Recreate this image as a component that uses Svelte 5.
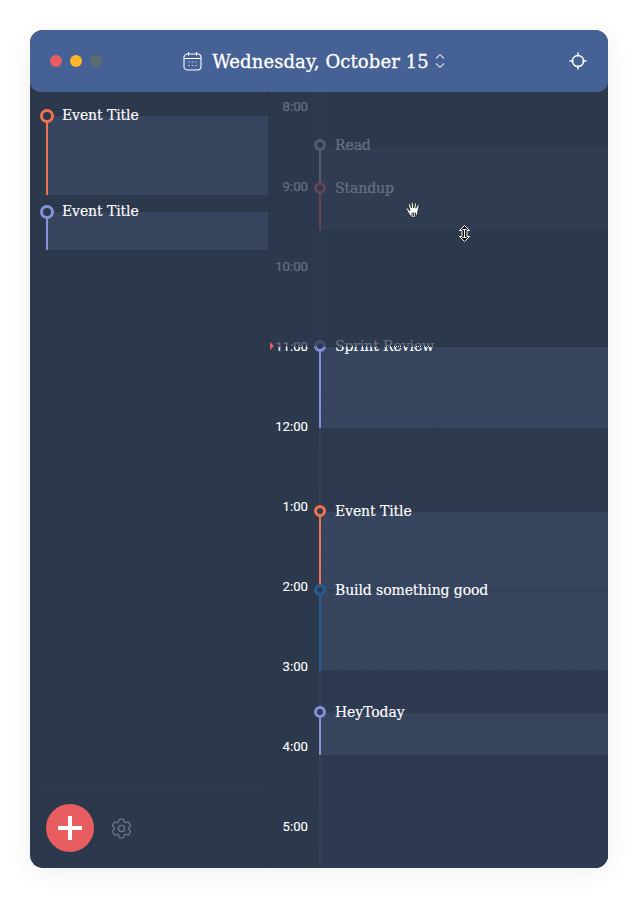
<script>
  const hours = ["8:00", "9:00", "10:00", "11:00", "12:00", "1:00", "2:00", "3:00", "4:00", "5:00"];

  // top / height are in px from the top of the timeline
  const events = [
    { title: "Read", top: 54, height: 84, color: "#a3c4c4" },
    { title: "Standup", top: 97, height: 41, color: "#f06a66" },
    { title: "Sprint Review", top: 255, height: 81, color: "#8090dc" },
    { title: "Event Title", top: 420, height: 78, color: "#ef7350" },
    { title: "Build something good", top: 499, height: 79, color: "#265c94" },
    { title: "HeyToday", top: 621, height: 42, color: "#8592da" }
  ];

  const allDay = [
    { title: "Event Title", height: 79, color: "#ef7350" },
    { title: "Event Title", height: 38, color: "#8592da" }
  ];

  const nowTop = 254;
</script>

<div class="page">
  <div class="window">
    <header class="titlebar">
      <div class="lights">
        <span class="light red"></span>
        <span class="light yellow"></span>
        <span class="light grey"></span>
      </div>
      <div class="date">
        <svg class="cal" width="19" height="20" viewBox="0 0 19 20" fill="none" stroke="#fff" stroke-width="1.1">
          <rect x="1" y="3" width="17" height="16" rx="3.5" />
          <path d="M1 7.500h17M5.500 1v3.500M13.500 1v3.500" />
          <path d="M5.500 11h1.400M8.800 11h1.400M12.100 11h1.400M5.500 14.500h1.400M8.800 14.500h1.400M12.100 14.500h1.400" stroke-opacity=".75" />
        </svg>
        <span class="date-text">Wednesday, October 15</span>
        <svg class="updown" width="10" height="16" viewBox="0 0 10 16" fill="none" stroke="#cfd6e4" stroke-width="1.1">
          <path d="M1 5.500 5 1.500l4 4M1 10.500l4 4 4-4" />
        </svg>
      </div>
      <svg class="target" width="18" height="18" viewBox="0 0 18 18" fill="none" stroke="#fff" stroke-width="1.5">
        <circle cx="9" cy="9" r="5.600" />
        <path d="M9 0.500v4M9 13.500v4M0.500 9h4M13.500 9h4" />
      </svg>
    </header>

    <div class="body">
      <aside class="sidebar">
        <div class="all-day">
          {#each allDay as ev}
            <div class="side-event">
              <div class="side-head">
                <span class="dot" style="border-color: {ev.color}"></span>
                <span class="ev-title">{ev.title}</span>
              </div>
              <div class="side-band" style="height: {ev.height}px; border-left-color: {ev.color}"></div>
            </div>
          {/each}
        </div>
        <div class="side-foot">
          <button class="add" aria-label="Add event">
            <svg width="24" height="24" viewBox="0 0 24 24" fill="#fff">
              <path d="M10 0h4v10h10v4H14v10h-4V14H0v-4h10z" />
            </svg>
          </button>
          <svg class="gear" width="25" height="25" viewBox="0 0 24 24" fill="none" stroke="#66758a" stroke-width="1.300" stroke-linejoin="round">
            <circle cx="12" cy="12" r="3" />
            <path d="M9.594 3.940c.09-.542.56-.94 1.110-.94h2.593c.55 0 1.020.398 1.110.94l.213 1.281c.063.374.313.686.645.87.074.04.147.083.22.127.324.196.72.257 1.075.124l1.217-.456a1.125 1.125 0 0 1 1.370.49l1.296 2.247a1.125 1.125 0 0 1-.26 1.431l-1.003.827c-.293.24-.438.613-.431.992a6.759 6.759 0 0 1 0 .255c-.007.378.138.75.43.99l1.005.828c.424.35.534.954.26 1.430l-1.298 2.247a1.125 1.125 0 0 1-1.369.491l-1.217-.456c-.355-.133-.75-.072-1.076.124a6.570 6.570 0 0 1-.22.128c-.331.183-.581.495-.644.869l-.213 1.280c-.09.543-.56.941-1.110.941h-2.594c-.55 0-1.020-.398-1.110-.94l-.213-1.281c-.062-.374-.312-.686-.644-.87a6.520 6.520 0 0 1-.22-.127c-.325-.196-.72-.257-1.076-.124l-1.217.456a1.125 1.125 0 0 1-1.369-.49l-1.297-2.247a1.125 1.125 0 0 1 .26-1.431l1.004-.827c.292-.24.437-.613.43-.992a6.932 6.932 0 0 1 0-.255c.007-.378-.138-.75-.43-.99l-1.004-.828a1.125 1.125 0 0 1-.26-1.430l1.297-2.247a1.125 1.125 0 0 1 1.370-.491l1.216.456c.356.133.751.072 1.076-.124.072-.044.146-.087.22-.128.332-.183.582-.495.644-.869l.214-1.281z" />
          </svg>
        </div>
      </aside>

      <main class="timeline">
        <div class="hours">
          {#each hours as h}
            <div class="hour">{h}</div>
          {/each}
        </div>
        <div class="track">
          <div class="rail"></div>
          {#each events as ev}
            <div class="event" style="top: {ev.top}px; height: {ev.height}px">
              <div class="band"></div>
              <div class="stem" style="background: {ev.color}"></div>
              <span class="dot on-track" style="border-color: {ev.color}"></span>
              <span class="ev-title on-track-title">{ev.title}</span>
            </div>
          {/each}
        </div>
        <div class="past" style="height: {nowTop}px"></div>
        <div class="now" style="top: {nowTop}px"></div>
      </main>
    </div>

    <svg class="cursor hand" width="17" height="18" viewBox="0 0 17 17">
      <path d="M1 7c1-1 2 0 4 2.500L3.500 3.500c-.3-1.300 1.400-1.600 1.800-.4L6.500 6.500 6.300 1.700c0-1.300 1.700-1.300 1.800 0L8.800 6.500 9.700 2c.3-1.200 1.900-.9 1.700.4l-.6 4.300 1.700-3c.6-1 2-.4 1.500.7L12.800 10c-.3 2-.8 5.500-3.300 5.500H7.500C5 15.500 3.500 11 1 7z" fill="#fff" stroke="#111" stroke-width=".7" />
      <path d="M7 11v3.500M8.700 11v3.500M10.400 11v3.500" stroke="#111" stroke-width=".9" />
    </svg>
    <svg class="cursor resize" width="13" height="17" viewBox="0 0 13 17">
      <path d="M6.500.5 11.500 5.500H9v6h2.500l-5 5-5-5H4v-6H1.500z" fill="#111" stroke="#fff" stroke-width="1" />
      <path d="M4.500 4.500h4M4.500 12.500h4M6.500 4.500v8" stroke="#fff" stroke-width="1" />
    </svg>
  </div>
</div>

<style>
  :global(body) {
    margin: 0;
    background: #fff;
  }

  .page {
    width: 638px;
    height: 898px;
    padding: 30px;
    box-sizing: border-box;
  }

  .window {
    position: relative;
    width: 578px;
    height: 838px;
    display: flex;
    flex-direction: column;
    border-radius: 13px;
    overflow: hidden;
    background: #2c384b;
    box-shadow: 0 4px 26px rgba(0, 0, 0, 0.07);
    font-family: "DejaVu Serif", serif;
  }

  .titlebar {
    height: 62px;
    flex: none;
    display: flex;
    align-items: center;
    justify-content: center;
    position: relative;
    z-index: 3;
    background: #466195;
    border-radius: 0 0 10px 10px;
  }

  .lights {
    position: absolute;
    left: 20px;
    display: flex;
    gap: 8px;
  }

  .light {
    width: 12px;
    height: 12px;
    border-radius: 50%;
  }
  .red { background: #e85d5f; }
  .yellow { background: #fdb52a; }
  .grey { background: #5b6b6c; }

  .date {
    display: flex;
    align-items: center;
    color: #fff;
    gap: 10px;
    margin-right: 10px;
  }

  .date-text {
    font-size: 18px;
    letter-spacing: 0.1px;
    -webkit-text-stroke: 0.3px #fff;
  }

  .updown {
    margin-left: -4px;
  }

  .target {
    position: absolute;
    right: 21px;
  }

  .body {
    flex: 1;
    display: flex;
    min-height: 0;
  }

  .sidebar {
    width: 238px;
    flex: none;
    display: flex;
    flex-direction: column;
    border-right: 1px dotted #252f40;
  }

  .all-day {
    flex: 1;
    padding-top: 15px;
    display: flex;
    flex-direction: column;
  }

  .side-event {
    padding-left: 10px;
    margin-bottom: 8px;
  }

  .side-head {
    position: relative;
    z-index: 1;
    display: flex;
    align-items: center;
    height: 17px;
    gap: 8px;
  }

  .side-band {
    margin-left: 6px;
    margin-top: -8px;
    border-left: 2px solid;
    background: repeating-linear-gradient(135deg, #36445d 0 2px, #37455e 2px 4px);
  }

  .dot {
    width: 14px;
    height: 14px;
    box-sizing: border-box;
    border: 3px solid;
    border-radius: 50%;
    flex: none;
    background: #2c384b;
  }

  .ev-title {
    font-size: 14px;
    color: #fff;
    line-height: 17px;
    letter-spacing: -0.1px;
    white-space: nowrap;
    -webkit-text-stroke: 0.15px #fff;
  }

  .side-foot {
    margin: 0 6px 0 16px;
    height: 81px;
    flex: none;
    border-top: 1px dotted #39465a;
    display: flex;
    align-items: center;
    box-sizing: border-box;
    gap: 15px;
  }

  .add {
    width: 48px;
    height: 48px;
    border: 0;
    padding: 0;
    border-radius: 50%;
    background: #e85d5f;
    display: flex;
    align-items: center;
    justify-content: center;
  }

  .timeline {
    position: relative;
    flex: 1;
    display: flex;
    overflow: hidden;
    background: #2c384b;
  }

  .hours {
    width: 39px;
    flex: none;
    display: flex;
    flex-direction: column;
    gap: 50px;
    align-items: flex-end;
  }

  .hour {
    height: 30px;
    line-height: 30px;
    font-family: Roboto, sans-serif;
    font-size: 13.2px;
    color: #fff;
    -webkit-text-stroke: 0.1px #fff;
  }

  .track {
    position: relative;
    flex: 1;
    margin-left: 11px;
    background: linear-gradient(180deg, #2d394c, #2e3a53);
  }

  .rail {
    position: absolute;
    left: 0;
    top: 0;
    bottom: 0;
    width: 2px;
    background: repeating-linear-gradient(180deg, #39465f 0 5px, transparent 5px 9px);
  }

  .event {
    position: absolute;
    left: 0;
    right: 0;
  }

  .band {
    position: absolute;
    left: 0;
    right: 0;
    top: 0;
    bottom: 0;
    background: repeating-linear-gradient(135deg, #36445d 0 2px, #37455e 2px 4px);
  }

  .stem {
    position: absolute;
    left: 0;
    top: 0;
    bottom: 0;
    width: 2px;
  }

  .on-track {
    position: absolute;
    left: -5px;
    top: -7px;
    width: 12px;
    height: 12px;
    background: #2d3a50;
  }

  .on-track-title {
    position: absolute;
    left: 16px;
    top: -9px;
  }

  .past {
    position: absolute;
    left: 0;
    right: 0;
    top: 0;
    background: rgba(45, 57, 77, 0.72);
    z-index: 1;
  }

  .now {
    position: absolute;
    left: 0;
    right: 0;
    height: 0;
    border-top: 1px dotted #253044;
    z-index: 2;
  }

  .now::before {
    content: "";
    position: absolute;
    left: 1px;
    top: -5px;
    border-left: 4px solid #e85d5f;
    border-top: 4px solid transparent;
    border-bottom: 4px solid transparent;
  }

  .cursor {
    position: absolute;
    z-index: 4;
  }
  .hand { left: 375px; top: 171px; }
  .resize { left: 428px; top: 195px; }
</style>
